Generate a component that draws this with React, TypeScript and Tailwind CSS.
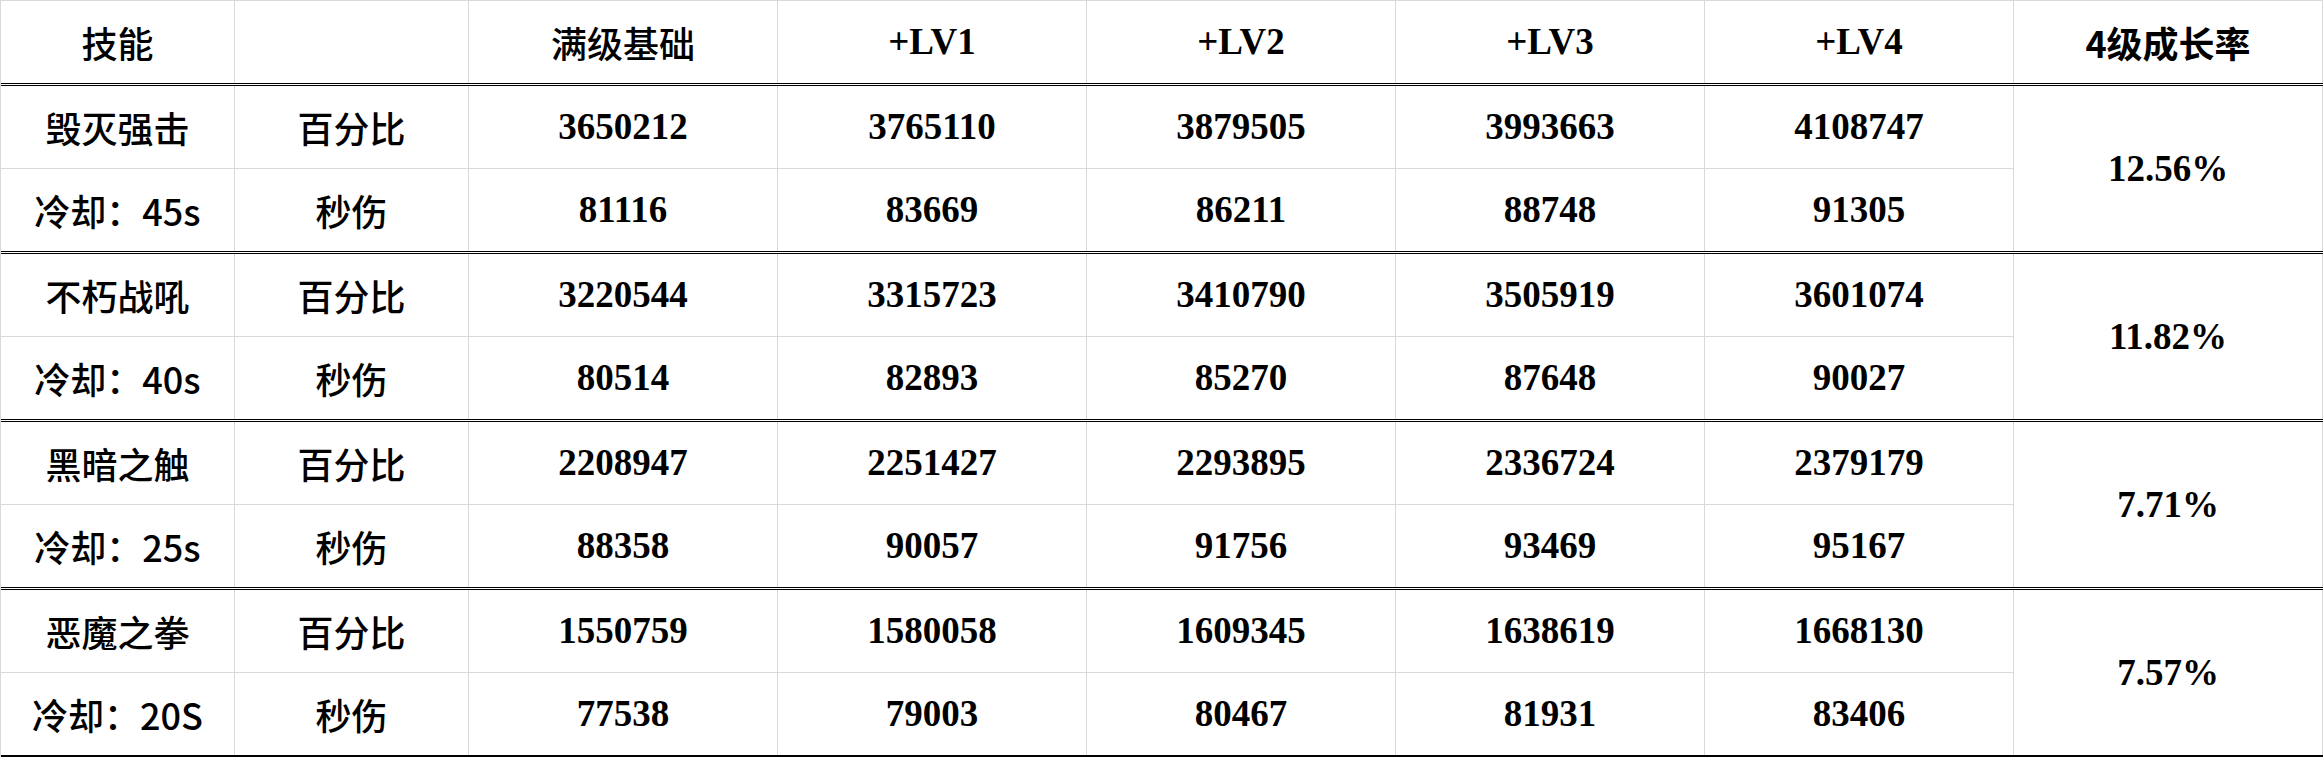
import React from "react";

type Skill = {
  name: string;
  cd: string;
  pct: number[];
  dps: number[];
  rate: string;
};

const skills: Skill[] = [
  {
    name: "毁灭强击",
    cd: "冷却：45s",
    pct: [3650212, 3765110, 3879505, 3993663, 4108747],
    dps: [81116, 83669, 86211, 88748, 91305],
    rate: "12.56%",
  },
  {
    name: "不朽战吼",
    cd: "冷却：40s",
    pct: [3220544, 3315723, 3410790, 3505919, 3601074],
    dps: [80514, 82893, 85270, 87648, 90027],
    rate: "11.82%",
  },
  {
    name: "黑暗之触",
    cd: "冷却：25s",
    pct: [2208947, 2251427, 2293895, 2336724, 2379179],
    dps: [88358, 90057, 91756, 93469, 95167],
    rate: "7.71%",
  },
  {
    name: "恶魔之拳",
    cd: "冷却：20S",
    pct: [1550759, 1580058, 1609345, 1638619, 1668130],
    dps: [77538, 79003, 80467, 81931, 83406],
    rate: "7.57%",
  },
];

const cols = "grid grid-cols-[234px_234px_309px_309px_309px_309px_309px_309px]";
const cjk = "font-['Noto_Sans_CJK_SC',sans-serif] text-[36px] font-medium";
const num = "font-['Liberation_Serif','Times_New_Roman',serif] font-bold text-[37px]";
const cell = "flex items-center justify-center whitespace-nowrap border-r border-[#d9d9d9] text-black";

export default function App() {
  return (
    <div className="w-[2323px] h-[757px] overflow-hidden bg-white">
      <div className="border-l border-t border-[#d9d9d9]">
        {/* Header */}
        <div className={`${cols} h-[85px] border-b-[3px] border-double border-black`}>
          <div className={`${cell} ${cjk}`}>技能</div>
          <div className={cell} />
          <div className={`${cell} ${cjk}`}>满级基础</div>
          {["+LV1", "+LV2", "+LV3", "+LV4"].map((h) => (
            <div key={h} className={`${cell} ${num}`}>
              {h}
            </div>
          ))}
          <div className={`${cell} font-['Noto_Sans_CJK_SC',sans-serif] text-[36px] font-bold`}>4级成长率</div>
        </div>

        {/* Skill groups */}
        {skills.map((s, gi) => (
          <div
            key={s.name}
            className={`${cols} grid-rows-[83px_82px] ${
              gi === skills.length - 1
                ? "h-[167px] border-b-2 border-black"
                : "h-[168px] border-b-[3px] border-double border-black"
            }`}
          >
            <div className={`${cell} ${cjk} border-b`}>{s.name}</div>
            <div className={`${cell} ${cjk} border-b`}>百分比</div>
            {s.pct.map((v, i) => (
              <div key={i} className={`${cell} ${num} border-b`}>
                {v}
              </div>
            ))}
            <div className={`${cell} ${num} row-span-2 col-start-8 row-start-1`}>{s.rate}</div>

            <div className={`${cell} ${cjk}`}>{s.cd}</div>
            <div className={`${cell} ${cjk}`}>秒伤</div>
            {s.dps.map((v, i) => (
              <div key={i} className={`${cell} ${num}`}>
                {v}
              </div>
            ))}
          </div>
        ))}
      </div>
    </div>
  );
}
